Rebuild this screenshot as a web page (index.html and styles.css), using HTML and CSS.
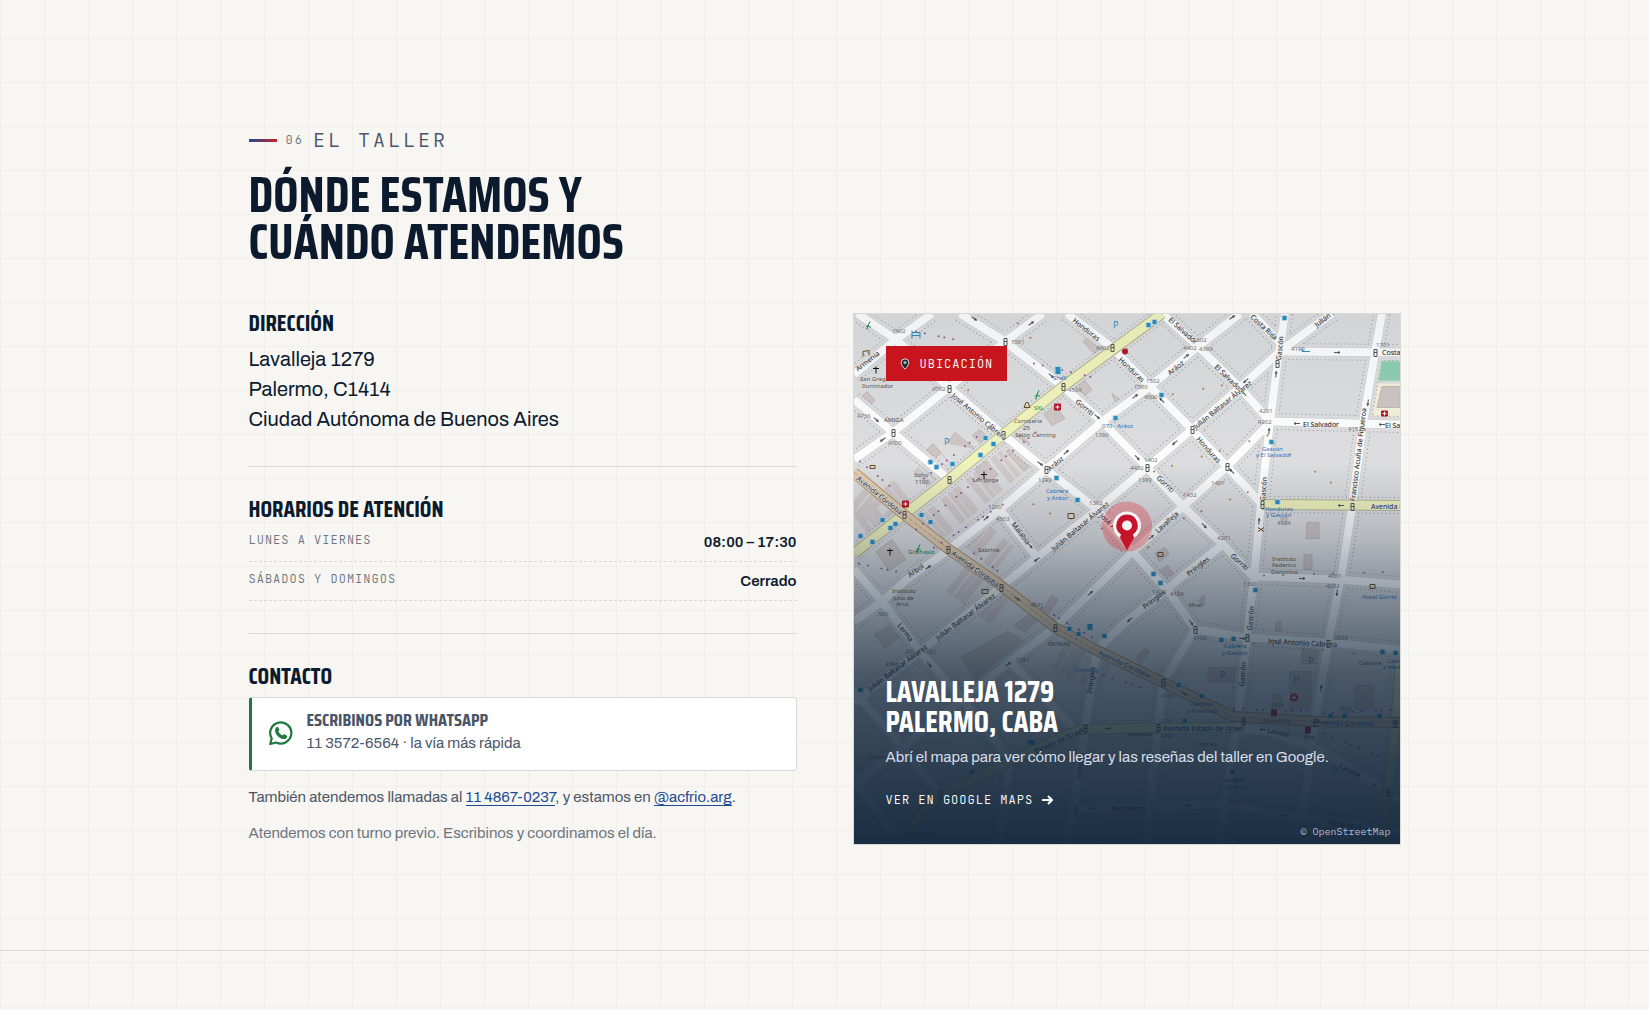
FILE: index.html
```
<!DOCTYPE html>
<html lang="es">
<head>
    <meta charset="UTF-8">
    <meta name="viewport" content="width=device-width, initial-scale=1.0">
    <title>El taller</title>
    <link rel="stylesheet" href="styles.css">
</head>
<body>
<section class="section" id="taller">
    <div class="container">
        <div class="eyebrow">
            <span class="eyebrow-line"></span>
            <span class="eyebrow-num">06</span>
            <span class="eyebrow-text">EL TALLER</span>
        </div>
        <h2 class="section-title">DÓNDE ESTAMOS Y<br>CUÁNDO ATENDEMOS</h2>

        <div class="location-grid">
            <div class="info">
                <div class="info-block">
                    <h3>DIRECCIÓN</h3>
                    <address class="address">Lavalleja 1279<br>Palermo, C1414<br>Ciudad Autónoma de Buenos Aires</address>
                </div>

                <div class="info-block">
                    <h3>HORARIOS DE ATENCIÓN</h3>
                    <dl class="hours">
                        <div class="hours-row">
                            <dt>LUNES A VIERNES</dt>
                            <dd>08:00 – 17:30</dd>
                        </div>
                        <div class="hours-row">
                            <dt>SÁBADOS Y DOMINGOS</dt>
                            <dd>Cerrado</dd>
                        </div>
                    </dl>
                </div>

                <div class="info-block">
                    <h3>CONTACTO</h3>
                    <a class="whatsapp" href="#whatsapp">
                        <svg class="whatsapp-icon" viewBox="0 0 26 26" aria-hidden="true">
                            <path d="M2.2 24 3.7 18.4A10.6 10.6 0 1 1 8.2 22.5Z" fill="none" stroke="currentColor" stroke-width="2.2" stroke-linejoin="round"/>
                            <path d="M8.2 7.4c.7-.8 1.8-.8 2.2.1l.9 2.1c.2.5 0 1-.9 2 .9 1.800 2.200 3.100 4.200 4 .9-1.100 1.300-1.500 1.800-1.300l2.200 1.100c.7.4.6 1.200.2 2-.7 1.400-2.400 1.900-4.100 1.500-4-1-7-4-7.600-7.700-.2-1.500.2-2.800 1.100-3.800Z" fill="currentColor"/>
                        </svg>
                        <span class="whatsapp-text">
                            <span class="whatsapp-title">ESCRIBINOS POR WHATSAPP</span>
                            <span class="whatsapp-sub">11 3572-6564 · la vía más rápida</span>
                        </span>
                    </a>
                    <p class="contact-alt">También atendemos llamadas al <a href="#tel">11 4867-0237</a>, y estamos en <a href="#instagram">@acfrio.arg</a>.</p>
                    <p class="contact-note">Atendemos con turno previo. Escribinos y coordinamos el día.</p>
                </div>
            </div>

            <a class="map-card" href="#mapa">
                <svg class="map" viewBox="0 0 546 531" preserveAspectRatio="xMidYMid slice" aria-hidden="true">
                    <defs>
                        <g id="streets">
                            <path d="M0 61 42 26 78 0M3 0 42 26 95 74 149 121 192 156 243 196 271 229 303 266 313 276 341 316"/>
                            <path d="M0 146 39 119 95 74 151 28 189 0M106 0 151 28 209 73 248 108 293 154 329 193 369 231 399 263"/>
                            <path d="M0 86 39 119 95 166M213 0 258 34 296 73 338 116 373 153 408 191"/>
                            <path d="M308 0 344 33 386 74 416 108 546 111M398 0 426 29 428 38 546 39"/>
                            <path d="M431 0 424 46 416 108 407 189 400 263 393 324 384 403 371 489 366 532"/>
                            <path d="M478 0 428 36 386 74 338 116 293 154 243 196 183 244 146 274 66 338 0 389"/>
                            <path d="M386 0 344 33 296 73 248 108 192 156 146 196 95 236 53 266 28 288 0 308"/>
                            <path d="M416 109 373 153 329 193 281 236 201 314 156 348 96 396 46 436 0 471"/>
                            <path d="M369 231 328 263 313 276 271 309 243 336 231 416 219 496 213 532M146 196 183 244"/>
                            <path d="M528 0 521 39 509 109 498 193 488 259 474 329 461 408 449 499"/>
                            <path d="M399 263 484 266 546 271M341 316 393 324 474 329 546 336M341 316 309 369 304 414 296 489 291 536"/>
                            <path d="M381 414 418 419 471 439 534 479 546 488M221 496 294 493 371 491 438 503 546 518"/>
                            <path d="M0 256 28 288 66 338 106 383 146 433 156 448 151 489 143 536M0 378 39 423 86 481M0 466 46 529M156 348 219 414"/>
                        </g>
                        <g id="avenues">
                            <path d="M308 0 209 73 149 121 95 166 50 201 0 240"/>
                            <path d="M408 191 546 192"/>
                            <path d="M39 531 86 481 156 448 226 416 276 415 381 414M546 349 542 409 534 479 529 532"/>
                        </g>
                        <path id="cordoba" d="M0 159 50 201 95 236 143 269 201 314 241 336 276 353 309 369 379 403 461 408 546 409"/>
                        <g id="dir"><path d="M-3 0H3M1-1 3 0 1 1"/></g>
                        <path id="light" d="M-1-3V4M2-3V4M-1-3H2M-1 0H2M-1 4H2"/>
                        <rect id="stop" x="-2" y="-3" width="5" height="5" rx="1"/>
                        <linearGradient id="shade" x1="0" y1="0" x2="0" y2="1">
                            <stop offset="0" stop-color="#0f213a" stop-opacity=".06"/>
                            <stop offset=".28" stop-color="#0f213a" stop-opacity=".01"/>
                            <stop offset=".42" stop-color="#0f213a" stop-opacity=".2"/>
                            <stop offset=".54" stop-color="#0f2338" stop-opacity=".46"/>
                            <stop offset=".68" stop-color="#0f2338" stop-opacity=".72"/>
                            <stop offset=".84" stop-color="#12263c" stop-opacity=".86"/>
                            <stop offset="1" stop-color="#12263c" stop-opacity=".96"/>
                        </linearGradient>
                    </defs>

                    <rect class="map-ground" width="546" height="531"/>
                    <path class="park" d="M523 43H546V68H519ZM390 240 399 252V261L384 246Z"/>
                    <path class="pitch" d="M528 48H546V67H525Z"/>
                    <path class="hospital" d="M519 70H546V105H511Z"/>

                    <!-- edificios -->
                    <g class="lots">
                        <path d="M72 219 158 148M8 213 50 179M102 265 150 302M5 181 42 211"/>
                        <path d="M115 216 151 246M205 340 250 364M70 170 95 148"/>
                    </g>
                    <g class="buildings">
                        <path d="M121 156 132 147 144 161 133 171ZM22 238 38 226 52 246 35 257ZM190 101 201 92 211 105 198 112ZM528 73H546V94H523ZM453 209H465V225H452ZM450 241H458V256H450ZM427 204H433V211H427Z"/>
                        <path d="M107 344 154 318 182 335 130 376ZM20 321 36 311 47 322 31 334ZM301 240 311 234 315 241 305 248ZM303 259 314 252 319 260 308 267ZM68 141 79 130 87 139 76 151ZM5 86 13 78 21 87 13 95Z"/>
                        <path d="M448 333H468V350H448ZM436 358H457V396H436ZM354 354H382V368H354ZM422 308H427V322H422ZM501 372H519V396H501ZM418 381H427V396H418ZM282 345 291 334 296 338 286 350ZM344 287 350 282 350 292Z"/>
                        <path d="M22 323 40 312M93 130 101 119 122 136M236 22 248 34 240 40 229 28ZM228 64 238 76 231 82 222 70ZM258 80 266 86 262 91Z"/>
                        <path d="M152 138 158 133 176 152 170 158ZM160 125 166 120 176 130 170 136ZM118 122 126 116 138 128 131 134ZM186 300 198 282 204 286 192 304ZM160 312 182 296 188 304 170 318Z"/>
                    </g>

                    <use href="#streets" class="kerb"/>
                    <use href="#streets" class="kerb-fill"/>
                    <use href="#avenues" class="kerb"/>
                    <use href="#avenues" class="kerb-fill"/>
                    <use href="#streets" class="street-case"/>
                    <use href="#streets" class="street"/>
                    <use href="#avenues" class="avenue-case"/>
                    <use href="#avenues" class="avenue"/>
                    <use href="#cordoba" class="cordoba-case"/>
                    <use href="#cordoba" class="cordoba"/>
                    <use href="#cordoba" class="cordoba-line"/>

                    <!-- comercios -->
                    <g class="dots purple">
                        <path d="M62 216 190 112M80 234 150 190M6 148 40 176M120 240 150 262M180 290 240 325M70 165 140 110M250 362 290 375M5 250 60 262"/>
                        <path d="M62 18 110 28M180 50 240 64M380 395 450 398M470 400 540 396M470 420 530 445"/>
                    </g>
                    <g class="dots brown">
                        <path d="M100 64 120 82M164 10 190 40M196 200 160 180M300 158 420 120M420 130 500 185M230 208 300 236M300 84 390 68M330 205 410 172M410 262 546 258M90 430 140 480M400 330 500 340"/>
                    </g>

                    <!-- semáforos, sentidos y paradas -->
                    <g class="signs">
                        <use href="#light" x="151" y="28"/><use href="#light" x="95" y="75"/><use href="#light" x="39" y="119"/><use href="#light" x="149" y="121"/><use href="#light" x="209" y="73"/><use href="#light" x="258" y="34"/><use href="#light" x="95" y="166"/><use href="#light" x="50" y="201"/><use href="#light" x="192" y="156"/><use href="#light" x="94" y="236"/><use href="#light" x="338" y="116"/><use href="#light" x="293" y="154"/><use href="#light" x="373" y="153"/><use href="#light" x="408" y="191"/><use href="#light" x="498" y="193"/><use href="#light" x="521" y="39"/><use href="#light" x="423" y="50"/><use href="#light" x="147" y="274"/><use href="#light" x="201" y="314"/><use href="#light" x="309" y="369"/><use href="#light" x="304" y="414"/><use href="#light" x="393" y="324"/><use href="#light" x="474" y="330"/><use href="#light" x="389" y="408"/><use href="#light" x="461" y="409"/><use href="#light" x="541" y="410"/><use href="#light" x="534" y="479"/><use href="#light" x="341" y="316"/><use href="#light" x="231" y="415"/><use href="#light" x="221" y="496"/><use href="#light" x="86" y="481"/>
                        <use href="#dir" transform="translate(120 5) rotate(35)"/><use href="#dir" transform="translate(177 10) rotate(-35)"/><use href="#dir" transform="translate(197 62) rotate(40)"/><use href="#dir" transform="translate(243 103) rotate(40)"/><use href="#dir" transform="translate(212 139) rotate(-40)"/><use href="#dir" transform="translate(186 150) rotate(35)"/><use href="#dir" transform="translate(22 106) rotate(40)"/><use href="#dir" transform="translate(29 126) rotate(145)"/><use href="#dir" transform="translate(132 205) rotate(-40)"/><use href="#dir" transform="translate(176 232) rotate(50)"/><use href="#dir" transform="translate(183 246) rotate(145)"/><use href="#dir" transform="translate(74 254) rotate(-35)"/><use href="#dir" transform="translate(378 4) rotate(-35)"/><use href="#dir" transform="translate(332 43) rotate(-38)"/><use href="#dir" transform="translate(281 83) rotate(-38)"/><use href="#dir" transform="translate(392 67) rotate(140)"/><use href="#dir" transform="translate(390 80) rotate(-135)"/><use href="#dir" transform="translate(321 129) rotate(140)"/><use href="#dir" transform="translate(308 87) rotate(-135)"/><use href="#dir" transform="translate(378 158) rotate(-135)"/><use href="#dir" transform="translate(283 144) rotate(45)"/><use href="#dir" transform="translate(350 212) rotate(45)"/><use href="#dir" transform="translate(422 61) rotate(-85)"/><use href="#dir" transform="translate(415 118) rotate(-85)"/><use href="#dir" transform="translate(405 208) rotate(-85)"/><use href="#dir" transform="translate(483 39)"/><use href="#dir" transform="translate(443 110) rotate(180)"/><use href="#dir" transform="translate(528 111) rotate(180)"/><use href="#dir" transform="translate(487 192) rotate(180)"/><use href="#dir" transform="translate(514 89) rotate(97)"/><use href="#dir" transform="translate(297 224) rotate(-40)"/><use href="#dir" transform="translate(448 265)"/><use href="#dir" transform="translate(483 279) rotate(97)"/><use href="#dir" transform="translate(276 306) rotate(140)"/><use href="#dir" transform="translate(337 309) rotate(55)"/><use href="#dir" transform="translate(388 325) rotate(5)"/><use href="#dir" transform="translate(163 285) rotate(35)"/><use href="#dir" transform="translate(236 280) rotate(-40)"/><use href="#dir" transform="translate(154 351) rotate(-40)"/><use href="#dir" transform="translate(75 351) rotate(50)"/><use href="#dir" transform="translate(330 380) rotate(25)"/><use href="#dir" transform="translate(409 416) rotate(180)"/><use href="#dir" transform="translate(514 409) rotate(180)"/><use href="#dir" transform="translate(254 415)"/><use href="#dir" transform="translate(333 492)"/><use href="#dir" transform="translate(428 502) rotate(8)"/><use href="#dir" transform="translate(238 495)"/><use href="#dir" transform="translate(467 375) rotate(-80)"/><use href="#dir" transform="translate(519 471) rotate(32)"/>
                    </g>
                    <g class="stops">
                        <use href="#stop" x="131" y="125"/><use href="#stop" x="139" y="131"/><use href="#stop" x="126" y="142"/><use href="#stop" x="98" y="151"/><use href="#stop" x="76" y="149"/><use href="#stop" x="82" y="154"/><use href="#stop" x="28" y="207"/><use href="#stop" x="41" y="211"/><use href="#stop" x="36" y="215"/><use href="#stop" x="6" y="223"/><use href="#stop" x="18" y="229"/><use href="#stop" x="67" y="202"/><use href="#stop" x="76" y="209"/><use href="#stop" x="202" y="165"/><use href="#stop" x="223" y="187"/><use href="#stop" x="261" y="105"/><use href="#stop" x="307" y="82"/><use href="#stop" x="294" y="12"/><use href="#stop" x="300" y="9"/><use href="#stop" x="430" y="5"/><use href="#stop" x="419" y="23"/><use href="#stop" x="417" y="129"/><use href="#stop" x="423" y="189"/><use href="#stop" x="299" y="261"/><use href="#stop" x="306" y="270"/><use href="#stop" x="401" y="277"/><use href="#stop" x="367" y="327"/><use href="#stop" x="379" y="326"/><use href="#stop" x="528" y="339"/><use href="#stop" x="541" y="340"/><use href="#stop" x="324" y="372"/><use href="#stop" x="347" y="383"/><use href="#stop" x="476" y="403"/><use href="#stop" x="490" y="403"/><use href="#stop" x="525" y="403"/><use href="#stop" x="215" y="316"/><use href="#stop" x="224" y="321"/><use href="#stop" x="250" y="323"/><use href="#stop" x="378" y="459"/><use href="#stop" x="6" y="377"/><use href="#stop" x="330" y="408"/><use href="#stop" x="118" y="459"/>
                        <rect x="201" y="53" width="6" height="8"/><rect x="233" y="310" width="6" height="7"/><rect x="174" y="426" width="7" height="6"/>
                        <path d="M58 17V25M58 19H66V25M58 22H66M448 35V38H456" class="line"/>
                    </g>
                    <g class="health">
                        <rect x="48" y="187" width="7" height="7" rx="1"/><rect x="200" y="90" width="7" height="7" rx="1"/><rect x="527" y="97" width="7" height="6" rx="1"/><circle cx="271" cy="38" r="3"/><circle cx="440" cy="384" r="4"/><rect x="417" y="396" width="6" height="7" rx="1"/><rect x="451" y="413" width="6" height="7" rx="1"/>
                    </g>
                    <g class="crosses">
                        <path d="M51.500 188.500V192.500M49.500 190.500H53.500M203.500 91.500V95.500M201.500 93.500H205.500M530.500 98V102M528.500 100H532.500M440 381.500V386.500M437.500 384H442.500"/>
                    </g>
                    <g class="churches">
                        <path d="M22 53V60M19 55H25M130 158V166M127 161H133M36 235V242M33 237H39"/>
                    </g>
                    <g class="runners">
                        <path d="M16 8 14 12 17 14M12 13 14 12 13 16M185 77 183 81 186 83M181 83 183 81 182 86M66 231 64 235 67 237M62 237 64 235 63 240"/>
                    </g>
                    <g class="shops">
                        <path d="M9 38V43M9 38 15 37V42M172 89 174 89 176 94H170ZM16 152H21V155H16ZM214 200H220V205H214ZM304 239H309V243H304ZM128 276H134V280H128ZM516 271H521V275H516ZM45 480H48M404 214 410 218M410 214 404 218"/>
                    </g>

                    <g class="street-names">
                        <text transform="translate(4 58) rotate(-38)">Armenia</text>
                        <text transform="translate(97 83) rotate(40)">José Antonio Cabrera</text>
                        <text transform="translate(218 8) rotate(38)">Honduras</text>
                        <text transform="translate(264 47) rotate(43)">Honduras</text>
                        <text transform="translate(221 89) rotate(40)">Gorriti</text>
                        <text transform="translate(196 158) rotate(-40)">Aráoz</text>
                        <text transform="translate(157 211) rotate(52)">Malabia</text>
                        <text transform="translate(200 238) rotate(-40)">Julián Baltasar Álvarez</text>
                        <text transform="translate(245 203) rotate(42)">José Antonio</text>
                        <text transform="translate(2 166) rotate(39)">Avenida Córdoba</text>
                        <text transform="translate(97 241) rotate(36)">Avenida Córdoba</text>
                        <text transform="translate(56 264) rotate(-36)">Árbol</text>
                        <text transform="translate(314 7) rotate(42)">El Salvador</text>
                        <text transform="translate(316 62) rotate(-38)">Aráoz</text>
                        <text transform="translate(360 54) rotate(44)">El Salvador</text>
                        <text transform="translate(342 116) rotate(-39)">Julián Baltasar Álvarez</text>
                        <text transform="translate(342 126) rotate(48)">Honduras</text>
                        <text transform="translate(302 165) rotate(43)">Gorriti</text>
                        <text transform="translate(304 220) rotate(-42)">Lavalleja</text>
                        <text transform="translate(376 243) rotate(42)">Gorriti</text>
                        <text transform="translate(335 263) rotate(-38)">Pringles</text>
                        <text transform="translate(396 4) rotate(43)">Costa Rica</text>
                        <text transform="translate(463 14) rotate(-38)">Julián B</text>
                        <text transform="translate(427 47) rotate(-84)">Gascón</text>
                        <text transform="translate(411 188) rotate(-85)">Gascón</text>
                        <text transform="translate(501 188) rotate(-83)">Francisco Acuña de Figueroa</text>
                        <text x="528" y="41">Costa</text>
                        <text x="449" y="113">El Salvador</text>
                        <text x="531" y="114">El Salvador</text>
                        <text x="517" y="195">Avenida Honduras</text>
                        <text transform="translate(84 327) rotate(-37)">Julián Baltasar Álvarez</text>
                        <text transform="translate(16 378) rotate(-37)">Julián Baltasar Álvarez</text>
                        <text transform="translate(43 312) rotate(52)">Lerma</text>
                        <text transform="translate(244 341) rotate(25)">Avenida Córdoba</text>
                        <text transform="translate(291 296) rotate(-38)">Pringles</text>
                        <text transform="translate(398 317) rotate(-85)">Gascón</text>
                        <text transform="translate(390 373) rotate(-85)">Gascón</text>
                        <text transform="translate(414 330) rotate(3)">José Antonio Cabrera</text>
                        <text transform="translate(463 411) rotate(2)">Avenida Córdoba</text>
                        <text x="309" y="417">Avenida Estado de Israel</text>
                        <text transform="translate(413 419) rotate(12)">Lavalle</text>
                        <text transform="translate(485 454) rotate(28)">Lavalle</text>
                        <text transform="translate(182 440) rotate(-24)">Estado de Israel</text>
                        <text transform="translate(238 380) rotate(-83)">Pringles</text>
                        <text transform="translate(227 466) rotate(-83)">Pringles</text>
                        <text x="258" y="497">Rocamora</text>
                        <text transform="translate(474 511) rotate(8)">Rocamora</text>
                    </g>
                    <g class="numbers">
                        <text x="38" y="19">1402</text><text x="157" y="30">1501</text><text x="78" y="77">4702</text><text x="3" y="104">4736</text><text x="34" y="131">4700</text><text x="242" y="36">4602</text><text x="214" y="78">4599</text><text x="241" y="123">1396</text><text x="184" y="168">1299</text><text x="134" y="195">1200</text><text x="142" y="207">4503</text><text x="235" y="191">1302</text><text x="339" y="28">1602</text><text x="329" y="36">4402</text><text x="345" y="37">4399</text><text x="292" y="69">1502</text><text x="280" y="75">1500</text><text x="290" y="85">4500</text><text x="437" y="37">4199</text><text x="522" y="33">1701</text><text x="405" y="99">4201</text><text x="404" y="110">4202</text><text x="494" y="117">4152</text><text x="290" y="148">1402</text><text x="276" y="156">4402</text><text x="284" y="168">1399</text><text x="357" y="171">1497</text><text x="329" y="183">1432</text><text x="363" y="226">4201</text><text x="423" y="211">4104</text><text x="474" y="264">4001</text><text x="389" y="272">1300</text><text x="472" y="274">4002</text><text x="298" y="280">1400</text><text x="316" y="282">4189</text><text x="24" y="302">300</text><text x="176" y="293">4341</text><text x="51" y="340">202</text><text x="69" y="340">1001</text><text x="31" y="352">4396</text><text x="339" y="326">4100</text><text x="480" y="326">3899</text><text x="162" y="348">1051</text><text x="307" y="384">4130</text><text x="417" y="393">1819</text><text x="484" y="397">3850</text><text x="304" y="409">1110</text><text x="306" y="424">4220</text><text x="374" y="490">4100</text><text x="479" y="502">4102</text>
                    </g>
                    <g class="places">
                        <text x="6" y="67">San Gregorio</text><text x="8" y="74">Iluminador</text><text x="30" y="108">AMIGA</text><text x="160" y="109">Comisaría</text><text x="169" y="116">25</text><text x="161" y="123">Salón Canning</text><text x="118" y="168">San Jorge</text><text x="60" y="163">Soho</text><text x="61" y="170">1100</text><text x="124" y="238">Sabrina</text><text x="418" y="247">Instituto</text><text x="418" y="253">Federico</text><text x="417" y="260">Dominico</text><text x="38" y="279">Instituto</text><text x="39" y="286">Julio de</text><text x="42" y="292">Arco</text><text x="194" y="332">RE/MAX</text><text x="335" y="293">Musi</text><text x="505" y="351">Cabrera</text><text x="409" y="409">Farmacity</text><text x="341" y="432">Carmes</text><text x="274" y="422">Instituto</text><text x="14" y="445">Colonial</text><text x="450" y="425">Alta</text>
                    </g>
                    <g class="places blue">
                        <text x="199" y="66">Shell</text><text x="248" y="114">070 - Aráoz</text><text x="192" y="179">Cabrera</text><text x="193" y="186">y Aráoz</text><text x="408" y="137">Gascón</text><text x="402" y="143">y El Salvador</text><text x="411" y="197">Honduras</text><text x="412" y="203">y Gascón</text><text x="370" y="334">Cabrera</text><text x="368" y="341">y Gascón</text><text x="508" y="285">Hotel Gorriti</text><text x="533" y="349">Cabrera</text><text x="529" y="355">y Medrano</text><text x="335" y="392">Córdoba</text><text x="333" y="399">y Palestina</text><text x="221" y="358">Canning</text><text x="370" y="468">Lavalle</text><text x="366" y="475">y Córdoba</text><text x="50" y="521">Corrientes</text>
                        <text x="259" y="14" class="parking">P</text><text x="90" y="131" class="parking">P</text><text x="454" y="350" class="parking">P</text><text x="366" y="364" class="parking">P</text><text x="439" y="369" class="parking">H</text><text x="478" y="460" class="parking">P</text>
                    </g>
                    <g class="places green">
                        <text x="54" y="240">Gimnasio</text><text x="180" y="96">SXL</text>
                    </g>

                    <rect width="546" height="531" fill="url(#shade)"/>
                    <g class="pin">
                        <circle class="pin-halo" cx="273" cy="213" r="25"/>
                        <circle class="pin-ring" cx="273" cy="212" r="14"/>
                        <path class="pin-body" d="M273 201A11 11 0 0 1 279 221L280 224 273 237 266 224 267 221A11 11 0 0 1 273 201Z"/>
                        <circle class="pin-hole" cx="273" cy="212" r="5"/>
                    </g>
                </svg>

                <span class="map-badge">
                    <svg class="badge-icon" viewBox="0 0 12 12" aria-hidden="true">
                        <path d="M6 11.200C4 8.800 2.200 7 2.200 4.600a3.800 3.800 0 0 1 7.600 0C9.800 7 8 8.800 6 11.200Z" fill="#1c2a33" stroke="#f1dede" stroke-width="1"/>
                        <circle cx="6" cy="4.600" r="1.600" fill="#a7b0b0"/>
                    </svg>
                    UBICACIÓN
                </span>
                <span class="map-content">
                    <span class="map-title">LAVALLEJA 1279<br>PALERMO, CABA</span>
                    <span class="map-text">Abrí el mapa para ver cómo llegar y las reseñas del taller en Google.</span>
                    <span class="map-link">VER EN GOOGLE MAPS
                        <svg class="arrow" viewBox="0 0 12 12" aria-hidden="true"><path d="M1 6H11M7 2 11 6 7 10"/></svg>
                    </span>
                </span>
                <span class="map-credit">© OpenStreetMap</span>
            </a>
        </div>
    </div>
</section>
</body>
</html>
```

FILE: styles.css
```
* {
    box-sizing: border-box;
}

body {
    margin: 0;
    min-height: 100vh;
    font-family: Archivo, 'Liberation Sans', Arial, sans-serif;
    font-size: 15px;
    line-height: 24px;
    color: #0c1a2e;
    background-color: #f7f6f2;
    background-image:
        linear-gradient(rgba(12, 26, 46, 0.03) 1px, transparent 1px),
        linear-gradient(90deg, rgba(12, 26, 46, 0.03) 1px, transparent 1px);
    background-size: 44px 44px;
    background-position: 0 38px;
}

h2,
h3,
p,
dl,
dd {
    margin: 0;
}

h2,
h3,
.whatsapp-title,
.map-title {
    font-family: 'Saira Condensed', 'Roboto Condensed', 'Liberation Sans Narrow', 'Open Sans Condensed', sans-serif;
    font-weight: 700;
}

.section {
    padding: 128px 24px 105px;
    border-bottom: 1px solid #d9d9d6;
}

.container {
    max-width: 1152px;
    margin: 0 auto;
}

.eyebrow {
    display: flex;
    align-items: center;
    height: 24px;
    margin-bottom: 19px;
    font-family: 'JetBrains Mono', 'IBM Plex Mono', 'Liberation Mono', monospace;
    font-weight: 300;
    color: #4a5568;
}

.eyebrow-line {
    width: 28px;
    height: 3px;
    margin-right: 9px;
    background: linear-gradient(90deg, #1e4a94, #c8202c);
}

.eyebrow-num {
    margin-right: 9px;
    font-size: 12px;
    letter-spacing: 2px;
    color: #6b7480;
}

.eyebrow-text {
    font-size: 20px;
    letter-spacing: 3px;
}

.section-title {
    margin-bottom: 48px;
    font-size: 50px;
    line-height: 47px;
}

.location-grid {
    display: grid;
    grid-template-columns: 1fr 1fr;
    gap: 56px;
}

.info-block + .info-block {
    margin-top: 32px;
    padding-top: 32px;
    border-top: 1px solid #d9d9d6;
}

.info-block h3 {
    font-size: 23px;
    line-height: 20px;
}

.address {
    margin-top: 11px;
    font-size: 20px;
    font-style: normal;
    line-height: 30px;
}

.hours {
    margin-top: 4px;
}

.hours-row {
    display: flex;
    justify-content: space-between;
    padding: 8px 0;
    border-bottom: 1px dashed #d9d9d6;
}

.hours-row dt {
    font-family: 'JetBrains Mono', 'IBM Plex Mono', 'Liberation Mono', monospace;
    font-size: 12px;
    font-weight: 300;
    line-height: 18px;
    letter-spacing: 1px;
    color: #6b7480;
}

.hours-row dd {
    font-size: 15px;
    font-weight: 600;
    line-height: 22px;
}

.whatsapp {
    display: flex;
    align-items: center;
    gap: 13px;
    margin-top: 11px;
    padding: 11px 16px 13px;
    background: #fff;
    border: 1px solid #d9d9d6;
    border-left: 3px solid #1f7a3f;
    border-radius: 3px;
    color: #4a5568;
    text-decoration: none;
}

.whatsapp-icon {
    width: 26px;
    height: 26px;
    color: #1f7a3f;
}

.whatsapp-text {
    display: flex;
    flex-direction: column;
    padding-bottom: 2px;
}

.whatsapp-title {
    font-size: 18px;
    line-height: 22px;
}

.contact-alt {
    margin-top: 14px;
    color: #4a5568;
}

.contact-alt a {
    color: #1e4a94;
    text-decoration: none;
    border-bottom: 1px solid #1e4a94;
}

.contact-note {
    margin-top: 12px;
    color: #6b7480;
}

/* Mapa */
.map-card {
    position: relative;
    display: flex;
    flex-direction: column;
    justify-content: space-between;
    align-items: flex-start;
    padding: 32px;
    border: 1px solid #d9d9d6;
    overflow: hidden;
    color: #fff;
    text-decoration: none;
}

.map {
    position: absolute;
    inset: 0;
    width: 100%;
    height: 100%;
}

.map-badge {
    position: relative;
    display: flex;
    align-items: center;
    gap: 9px;
    padding: 6px 14px 5px 13px;
    background: #c8141c;
    font-family: 'JetBrains Mono', 'IBM Plex Mono', 'Liberation Mono', monospace;
    font-size: 12px;
    font-weight: 300;
    letter-spacing: 1px;
}

.badge-icon {
    width: 12px;
    height: 12px;
}

.map-content {
    position: relative;
    display: flex;
    flex-direction: column;
}

.map-title {
    font-size: 30px;
    line-height: 30px;
}

.map-text {
    margin-top: 8px;
    color: #d8dfe8;
}

.map-link {
    display: flex;
    align-items: center;
    gap: 8px;
    margin-top: 19px;
    font-family: 'JetBrains Mono', 'IBM Plex Mono', 'Liberation Mono', monospace;
    font-size: 12px;
    font-weight: 300;
    letter-spacing: 1px;
}

.arrow {
    width: 12px;
    height: 12px;
    fill: none;
    stroke: #fff;
    stroke-width: 2;
}

.map-credit {
    position: absolute;
    right: 9px;
    bottom: 6px;
    font-family: 'IBM Plex Mono', 'Liberation Mono', monospace;
    font-size: 10px;
    line-height: 12px;
    color: #b4bdc9;
}

.map-ground {
    fill: #dfdfe0;
}

.park {
    fill: #c4e6c4;
}

.pitch {
    fill: #8fd0b5;
}

.hospital {
    fill: #f6f3dc;
}

.lots path {
    fill: none;
    stroke: #d5cccb;
    stroke-width: 32;
    stroke-dasharray: 7 2 5 1 8 9;
}

.buildings path {
    fill: #cfc7c5;
    stroke: #c2b8b6;
}

.kerb {
    fill: none;
    stroke: #96969b;
    stroke-width: 17;
    stroke-dasharray: 1 3;
}

.kerb-fill {
    fill: none;
    stroke: #dfdfe0;
    stroke-width: 15;
}

.street-case,
.street {
    fill: none;
    stroke: #cfcfd2;
    stroke-width: 9;
    stroke-linejoin: round;
}

.street {
    stroke: #fff;
    stroke-width: 8;
}

.avenue-case,
.avenue {
    fill: none;
    stroke: #b9bb93;
    stroke-width: 11;
    stroke-linejoin: round;
}

.avenue {
    stroke: #f3f5bd;
    stroke-width: 9;
}

.cordoba-case,
.cordoba,
.cordoba-line {
    fill: none;
    stroke: #b5966c;
    stroke-width: 11;
    stroke-linejoin: round;
}

.cordoba {
    stroke: #e6cfae;
    stroke-width: 9;
}

.cordoba-line {
    stroke: #c9988c;
    stroke-width: 1;
    stroke-dasharray: 4 2;
}

.dots {
    fill: none;
    stroke-width: 2;
    stroke-linecap: round;
    stroke-dasharray: 0 9 0 14 0 6;
}

.purple {
    stroke: #95559b;
}

.brown {
    stroke: #b27e3d;
    stroke-dasharray: 0 19 0 31;
}

.signs {
    fill: none;
    stroke: #555;
    stroke-width: 1;
}

.stops {
    fill: #2b8fc0;
    stroke: #bcdcec;
    stroke-width: 1;
}

.stops .line {
    fill: none;
    stroke: #2b8fc0;
}

.health {
    fill: #b5182c;
}

.crosses {
    stroke: #fff;
    stroke-width: 1;
}

.churches,
.runners,
.shops {
    fill: none;
    stroke: #111;
    stroke-width: 1;
}

.runners {
    stroke: #178a4c;
}

.shops {
    stroke: #6b4a1b;
}

.street-names,
.numbers,
.places {
    font-family: 'Noto Sans', sans-serif;
    font-size: 7px;
    fill: #222;
}

.street-names {
    paint-order: stroke;
    stroke: #f4f4f4;
    stroke-width: 1;
}

.numbers {
    font-size: 6px;
    fill: #777;
}

.places {
    font-size: 6px;
    fill: #5e554d;
}

.places.blue {
    fill: #2f73c4;
}

.places.green {
    fill: #178a4c;
}

.places .parking {
    font-size: 9px;
    fill: #2b8fc0;
}

.pin-halo {
    fill: #e0202c;
    fill-opacity: 0.3;
}

.pin-ring,
.pin-hole {
    fill: #f4f4f4;
}

.pin-body {
    fill: #c8142a;
}

@media (max-width: 900px) {
    .location-grid {
        grid-template-columns: 1fr;
    }

    .map-card {
        min-height: 532px;
    }
}
```
